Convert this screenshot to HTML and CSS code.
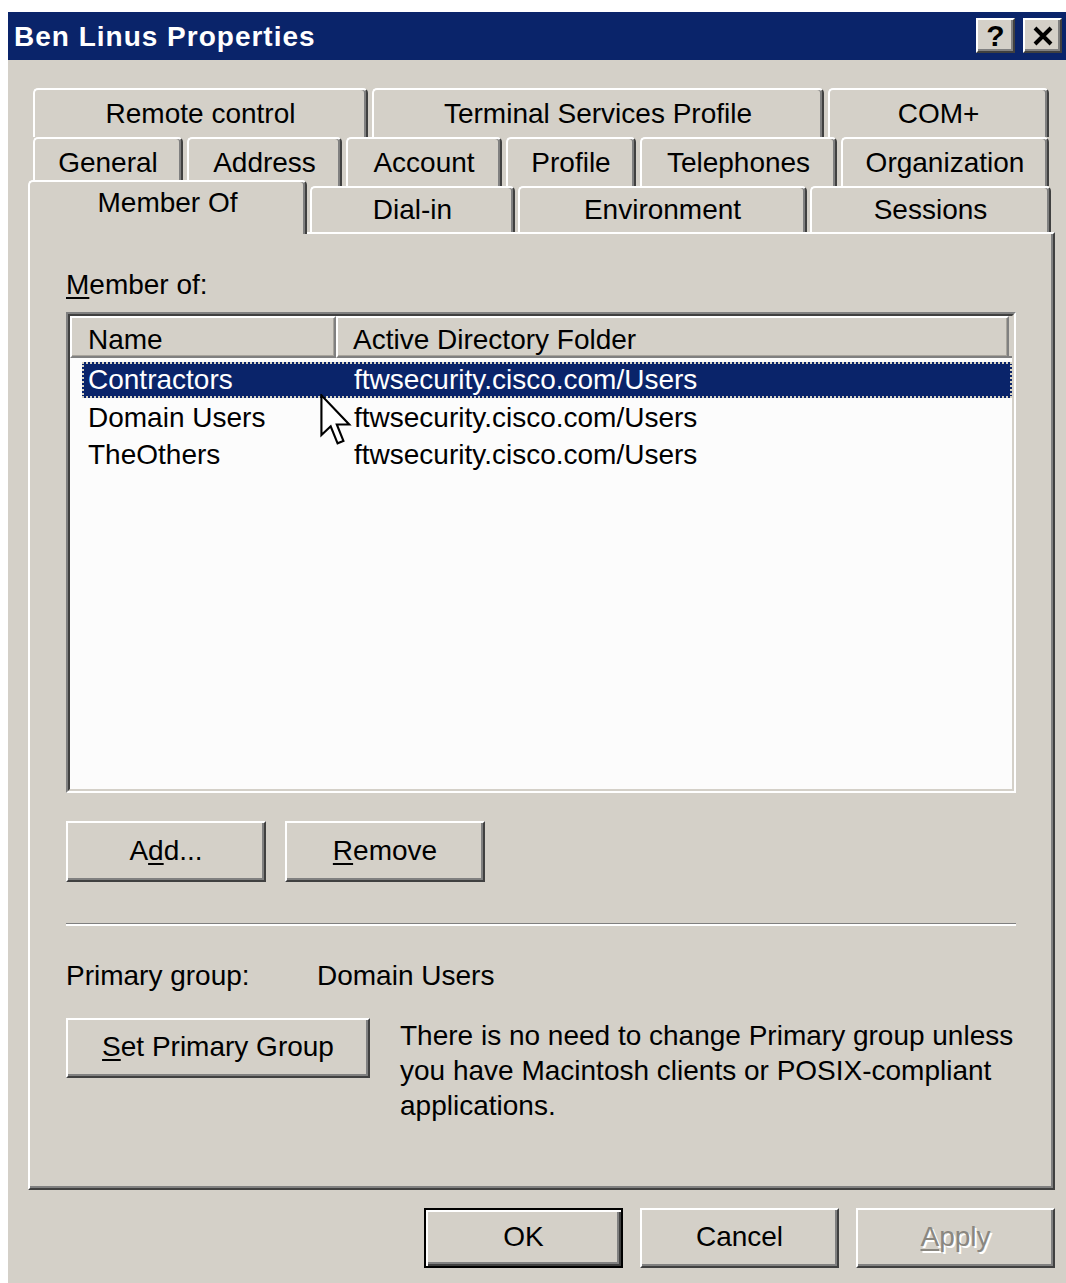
FILE: index.html
```html
<!DOCTYPE html>
<html lang="en">
<head>
<meta charset="utf-8">
<title>Ben Linus Properties</title>
<link rel="stylesheet" href="styles.css">
</head>
<body>
<div class="window">
  <div class="titlebar">
    <span class="title">Ben Linus Properties</span>
    <div class="caption-buttons">
      <div class="cap-btn help">?</div>
      <div class="cap-btn close">
        <svg width="22" height="20" viewBox="0 0 22 20" aria-hidden="true">
          <path d="M3 2 L19 18 M19 2 L3 18" stroke="#000" stroke-width="4" fill="none"/>
        </svg>
      </div>
    </div>
  </div>

  <div class="client">
    <div class="tabstrip">
      <div class="tabrow">
        <div class="tab w-remote">Remote control</div>
        <div class="tab w-tsp">Terminal Services Profile</div>
        <div class="tab w-com">COM+</div>
      </div>
      <div class="tabrow">
        <div class="tab w-general">General</div>
        <div class="tab w-address">Address</div>
        <div class="tab w-account">Account</div>
        <div class="tab w-profile">Profile</div>
        <div class="tab w-phones">Telephones</div>
        <div class="tab w-org">Organization</div>
      </div>
      <div class="tabrow front">
        <div class="tab selected w-member">Member Of</div>
        <div class="tab w-dialin">Dial-in</div>
        <div class="tab w-env">Environment</div>
        <div class="tab w-sessions">Sessions</div>
      </div>
    </div>

    <div class="panel">
      <div class="field-label"><u>M</u>ember of:</div>

      <div class="listview">
        <div class="lv-inner">
          <div class="lv-header">
            <div class="lv-col col-name">Name</div>
            <div class="lv-col col-folder">Active Directory Folder</div>
            <div class="lv-fill"></div>
          </div>
          <div class="lv-body">
            <div class="lv-row selected"><span class="cell-name">Contractors</span><span>ftwsecurity.cisco.com/Users</span></div>
            <div class="lv-row"><span class="cell-name">Domain Users</span><span>ftwsecurity.cisco.com/Users</span></div>
            <div class="lv-row"><span class="cell-name">TheOthers</span><span>ftwsecurity.cisco.com/Users</span></div>
          </div>
        </div>
        <svg class="pointer" width="32" height="53" viewBox="0 0 12 20" aria-hidden="true">
          <path d="M0.5 0.5 L0.5 15.5 L4 12.2 L6.6 18.6 L8.8 17.7 L6.3 11.5 L11 11.5 Z" fill="#fff" stroke="#000" stroke-width="0.8" stroke-linejoin="miter"/>
        </svg>
      </div>

      <div class="button-row">
        <div class="btn">A<u>d</u>d...</div>
        <div class="btn"><u>R</u>emove</div>
      </div>

      <div class="separator"></div>

      <div class="primary-row">
        <span class="primary-label">Primary group:</span>
        <span>Domain Users</span>
      </div>

      <div class="set-primary">
        <div class="btn wide"><u>S</u>et Primary Group</div>
        <p class="note">There is no need to change Primary group unless you have Macintosh clients or POSIX-compliant applications.</p>
      </div>
    </div>

    <div class="dialog-buttons">
      <div class="btn default">OK</div>
      <div class="btn">Cancel</div>
      <div class="btn disabled"><u>A</u>pply</div>
    </div>
  </div>
</div>
</body>
</html>
```

FILE: styles.css
```css
html, body {
  margin: 0;
  padding: 0;
  background: #ffffff;
  overflow: hidden;
}

body {
  font-family: "Liberation Sans", Arial, sans-serif;
  font-size: 28px;
  color: #000;
}

u {
  text-decoration-thickness: 2px;
  text-underline-offset: 3px;
}

/* ---- window frame ---- */
.window {
  margin: 12px 0 0 8px;
  width: 1058px;
  height: 1271px;
  background: #d4d0c8;
  display: flex;
  flex-direction: column;
}

.titlebar {
  height: 48px;
  flex: none;
  background: #0a246a;
  display: flex;
  align-items: center;
  justify-content: space-between;
  padding: 0 4px 0 6px;
}

.title {
  color: #fff;
  font-weight: bold;
  font-size: 28px;
  letter-spacing: 1px;
  line-height: 32px;
  padding-top: 2px;
}

.caption-buttons {
  display: flex;
  gap: 8px;
  align-self: flex-start;
  margin-top: 6px;
}

.cap-btn {
  box-sizing: border-box;
  width: 39px;
  height: 35px;
  background: #d4d0c8;
  border-style: solid;
  border-width: 2px;
  border-color: #fff #404040 #404040 #fff;
  box-shadow: inset -2px -2px 0 #808080;
  display: flex;
  align-items: center;
  justify-content: center;
}

.cap-btn.help {
  font-weight: bold;
  font-size: 30px;
  line-height: 30px;
}

/* ---- client area ---- */
.client {
  flex: 1;
  padding: 28px 11px 0 20px;
}

/* ---- tabs ---- */
.tabstrip {
  display: flex;
  flex-direction: column;
}

.tabrow {
  display: flex;
  gap: 4px;
  padding-left: 5px;
  height: 49px;
}

.tabrow.front {
  gap: 3px;
  padding-left: 0;
  height: 46px;
  align-items: flex-end;
}

.tab {
  box-sizing: border-box;
  flex: none;
  height: 100%;
  background: #d4d0c8;
  border-top: 2px solid #fff;
  border-left: 2px solid #fff;
  border-right: 2px solid #404040;
  border-radius: 5px 5px 0 0;
  box-shadow: inset -2px 0 0 #808080;
  display: flex;
  align-items: center;
  justify-content: center;
  line-height: 32px;
  white-space: nowrap;
}

.tab.selected {
  position: relative;
  z-index: 2;
  height: 54px;
  margin-bottom: -2px;
  padding-bottom: 10px;
}

.w-remote { width: 335px; }
.w-tsp { width: 452px; }
.w-com { width: 221px; }

.w-general { width: 150px; }
.w-address { width: 155px; }
.w-account { width: 156px; }
.w-profile { width: 130px; }
.w-phones { width: 197px; }
.w-org { width: 208px; }

.w-member { width: 279px; }
.w-dialin { width: 205px; }
.w-env { width: 289px; }
.w-sessions { width: 241px; }

/* ---- property page ---- */
.panel {
  box-sizing: border-box;
  width: 1027px;
  height: 958px;
  border-style: solid;
  border-width: 2px;
  border-color: #fff #404040 #404040 #fff;
  box-shadow: inset -2px -2px 0 #808080;
  padding: 35px 36px 0 36px;
}

.field-label {
  line-height: 32px;
}

/* ---- list view ---- */
.listview {
  position: relative;
  margin-top: 11px;
  width: 950px;
  height: 481px;
  box-sizing: border-box;
  border-style: solid;
  border-width: 2px;
  border-color: #808080 #fff #fff #808080;
}

.lv-inner {
  box-sizing: border-box;
  height: 100%;
  border-style: solid;
  border-width: 2px;
  border-color: #404040 #d4d0c8 #d4d0c8 #404040;
  background: #fcfcfc;
}

.lv-header {
  display: flex;
  height: 42px;
  background: #d4d0c8;
}

.lv-col {
  box-sizing: border-box;
  height: 42px;
  border-style: solid;
  border-width: 2px;
  border-color: #fff #808080 #808080 #fff;
  box-shadow: inset -1px -1px 0 #a8a49c;
  line-height: 30px;
  padding: 7px 0 0 15px;
  white-space: nowrap;
}

.col-name { width: 266px; padding-left: 16px; }
.col-folder { width: 673px; }

.lv-fill {
  flex: 1;
  border-bottom: 2px solid #808080;
}

.lv-body {
  padding: 4px 0 0 12px;
}

.lv-row {
  display: flex;
  height: 37px;
  line-height: 37px;
  padding-left: 6px;
  white-space: nowrap;
}

.lv-row .cell-name {
  width: 266px;
  flex: none;
}

.lv-row.selected {
  background: #0a246a;
  color: #fff;
  outline: 2px dotted #d8d4c4;
  outline-offset: -2px;
  height: 36px;
  line-height: 36px;
  margin-bottom: 1px;
}

.pointer {
  position: absolute;
  left: 252px;
  top: 80px;
}

/* ---- push buttons ---- */
.btn {
  box-sizing: border-box;
  flex: none;
  width: 200px;
  height: 61px;
  background: #d4d0c8;
  border-style: solid;
  border-width: 2px;
  border-color: #fff #404040 #404040 #fff;
  box-shadow: inset -2px -2px 0 #808080;
  display: flex;
  align-items: center;
  justify-content: center;
  white-space: nowrap;
  padding-bottom: 2px;
}

.button-row {
  display: flex;
  gap: 19px;
  margin-top: 28px;
}

.separator {
  margin-top: 41px;
  width: 950px;
  height: 1px;
  background: #808080;
  border-bottom: 2px solid #fff;
}

.primary-row {
  margin-top: 34px;
  display: flex;
  line-height: 32px;
}

.primary-label {
  width: 251px;
}

.set-primary {
  margin-top: 26px;
  display: flex;
  align-items: flex-start;
  gap: 30px;
}

.btn.wide {
  width: 304px;
  height: 60px;
}

.note {
  margin: 0;
  flex: 1;
  min-width: 0;
  line-height: 35px;
}

/* ---- OK / Cancel / Apply ---- */
.dialog-buttons {
  display: flex;
  justify-content: flex-end;
  gap: 17px;
  margin-top: 18px;
}

.dialog-buttons .btn {
  width: 199px;
  height: 60px;
}

.btn.default {
  border: 2px solid #000;
  box-shadow: inset 2px 2px 0 #fff, inset -2px -2px 0 #404040, inset -4px -4px 0 #808080;
}

.btn.disabled {
  color: #8a8780;
  text-shadow: 2px 2px 0 #fff;
}
```
